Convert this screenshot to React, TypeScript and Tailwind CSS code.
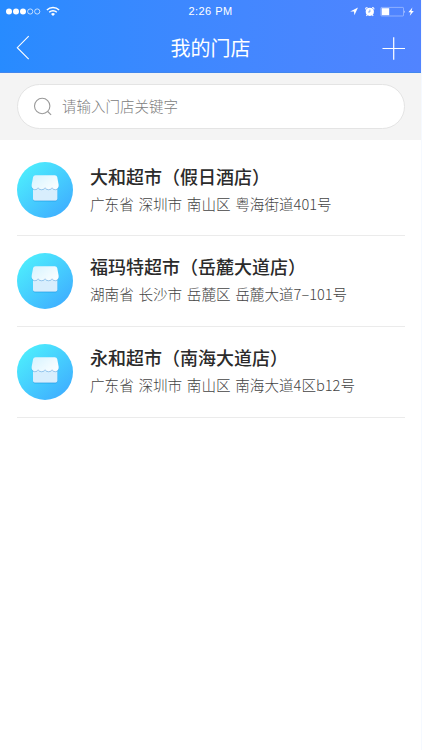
import React from 'react';

const stores = [
  { name: '大和超市（假日酒店）', address: '广东省 深圳市 南山区 粤海街道401号' },
  { name: '福玛特超市（岳麓大道店）', address: '湖南省 长沙市 岳麓区 岳麓大道7–101号' },
  { name: '永和超市（南海大道店）', address: '广东省 深圳市 南山区 南海大道4区b12号' },
];

function StatusBar() {
  return (
    <div className="grid h-[23px] grid-cols-[1fr_auto_1fr] items-center text-white">
      <svg className="h-[23px] w-[70px]" viewBox="0 0 70 23" fill="none">
        <g fill="#fff">
          <circle cx="9" cy="11.5" r="3" />
          <circle cx="16" cy="11.5" r="3" />
          <circle cx="23" cy="11.5" r="3" />
        </g>
        <g stroke="#fff" strokeWidth="0.7">
          <circle cx="30.2" cy="11.5" r="2.6" />
          <circle cx="37.2" cy="11.5" r="2.6" />
        </g>
        <g stroke="#fff" strokeWidth="1.4">
          <path d="M46.9 10a8.6 8.6 0 0 1 12.2 0" />
          <path d="M49.2 12.3a5.4 5.4 0 0 1 7.6 0" />
        </g>
        <path d="M51 13.9a2.9 2.9 0 0 1 4 0l-2 2z" fill="#fff" />
      </svg>
      <span className="font-['Liberation_Sans',sans-serif] text-[11px] leading-[23px] tracking-[0.45px]">2:26 PM</span>
      <svg className="h-[23px] w-[72px] justify-self-end" viewBox="350 0 72 23" fill="none">
        <path d="M359 7.4l-7.8 4 3.8.2.4 3.7z" fill="#fff" />
        <circle cx="370.8" cy="11.8" r="4.1" fill="#fff" />
        <path d="M366.5 9.4a2 2 0 0 1 2-1.9M373.1 7.5a2 2 0 0 1 2 1.9M368.2 15l-.8.8M373.4 15l.8.8" stroke="#fff" strokeWidth="1.1" />
        <path d="M370.9 9.6v2.4h-1.8" stroke="#4a87ff" strokeWidth="0.7" />
        <rect x="381.9" y="7.4" width="22.6" height="8.6" rx="0.8" stroke="#fff" strokeOpacity="0.6" strokeWidth="0.6" />
        <rect x="382.7" y="8.2" width="7.5" height="7" fill="#fff" />
        <path d="M405.3 10.2q1.2 1.5 0 3z" fill="#fff" />
        <path d="M413.4 7.5l-4 4.7h2.3l-.9 3.6 4-4.7h-2.3z" fill="#fff" />
      </svg>
    </div>
  );
}

function StoreIcon({ id }: { id: string }) {
  return (
    <svg className="h-14 w-14 shrink-0" viewBox="0 0 56 56">
      <defs>
        <linearGradient id={`${id}-bg`} x1="0.15" y1="0.1" x2="0.85" y2="0.9">
          <stop offset="0" stopColor="#4decfd" />
          <stop offset="1" stopColor="#3fb0ff" />
        </linearGradient>
        <linearGradient id={`${id}-roof`} x1="0" y1="0" x2="1" y2="0.6">
          <stop offset="0" stopColor="#d5f3ff" />
          <stop offset="1" stopColor="#f8fdff" />
        </linearGradient>
        <filter id={`${id}-shadow`} x="-20%" y="-20%" width="140%" height="150%">
          <feDropShadow dx="0" dy="0.8" stdDeviation="0.7" floodColor="#158bd5" floodOpacity="0.55" />
        </filter>
      </defs>
      <circle cx="28" cy="28" r="28" fill={`url(#${id}-bg)`} />
      <path d="M16 25h24.3v11.7a1.8 1.8 0 0 1-1.8 1.8H17.8a1.8 1.8 0 0 1-1.8-1.8z" fill="#d8eefd" filter={`url(#${id}-shadow)`} />
      <path
        d="M18.5 13.2h19.3a2.5 2.5 0 0 1 2.4 1.9l1.4 7.4c.5 2.7-1 4.7-3.1 4.7-1.5 0-2.7-.7-3.4-1.9-.8 1.2-2 1.9-3.5 1.9s-2.7-.7-3.5-1.9c-.8 1.2-2 1.9-3.5 1.9s-2.7-.7-3.5-1.9c-.7 1.2-1.9 1.9-3.3 1.9-2.3 0-3.6-2-3.1-4.7l1.4-7.4a2.5 2.5 0 0 1 2.4-1.9z"
        fill={`url(#${id}-roof)`}
        filter={`url(#${id}-shadow)`}
      />
    </svg>
  );
}

export default function App() {
  return (
    <div className="h-[750px] w-[422px] overflow-hidden border-r border-[#f5f9ff] bg-white font-['Noto_Sans_CJK_SC',sans-serif]">
      <header className="h-[73px] border-b border-[#4287ee] bg-linear-to-r from-[#278bff] to-[#5184ff] text-white">
        <StatusBar />
        <div className="grid h-[49px] grid-cols-[1fr_auto_1fr] items-center">
          <button aria-label="返回" className="ml-4 h-[26px] w-4">
            <svg className="h-[26px] w-4" viewBox="0 0 16 26" fill="none" stroke="#fff" strokeWidth="1.1">
              <path d="M12.7 1.2L1.3 12.7l11.4 11.5" />
            </svg>
          </button>
          <h1 className="text-[20px] leading-[49px] font-normal">我的门店</h1>
          <button aria-label="添加" className="mr-[15px] h-6 w-6 justify-self-end">
            <svg className="h-6 w-6" viewBox="0 0 24 24" stroke="#fff" strokeWidth="1.2">
              <path d="M.5 12.5H23M11.7 1.2v22.5" />
            </svg>
          </button>
        </div>
      </header>

      <div className="h-[67px] bg-[#f4f4f4] pt-[11px] pr-4 pl-[17px]">
        <label className="flex h-[45px] items-center rounded-full border border-[#e4e4e4] bg-white pl-[15px]">
          <svg className="h-5 w-5 shrink-0" viewBox="0 0 20 20" fill="none" stroke="#999" strokeWidth="1.1">
            <circle cx="9.2" cy="9" r="7.7" />
            <path d="M14.7 14.5l3.4 3.4" />
          </svg>
          <span className="ml-[9px] -mt-0.5 text-[14.5px] leading-5 font-light text-[#808080]">请输入门店关键字</span>
        </label>
      </div>

      <ul className="pr-4 pl-[17px]">
        {stores.map((store, i) => (
          <li key={store.name} className="flex h-[91px] border-b border-[#ebebeb] pt-[17px] first:h-[96px] first:pt-[22px]">
            <StoreIcon id={`store-${i}`} />
            <div className={`ml-[17px] whitespace-nowrap ${i === 0 ? '-mt-px' : '-mt-0.5'}`}>
              <h2 className="text-[18px] leading-[30px] font-medium text-[#2b2b2b]">{store.name}</h2>
              <p className="text-[14.6px] leading-[25px] font-light text-[#444] [word-spacing:1.4px]">{store.address}</p>
            </div>
          </li>
        ))}
      </ul>
    </div>
  );
}
